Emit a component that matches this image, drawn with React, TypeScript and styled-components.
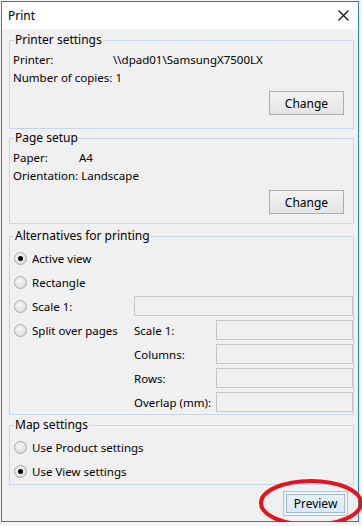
import React from "react";
import styled, { createGlobalStyle } from "styled-components";

const GlobalStyle = createGlobalStyle`
  html, body {
    margin: 0;
    padding: 0;
    background: #f4f4f4;
  }
  body {
    font-family: "Noto Sans", "Open Sans", sans-serif;
    font-size: 11.5px;
    color: #000;
  }
`;

const Dialog = styled.div`
  position: relative;
  margin: 1px 0 0 1px;
  width: 358px;
  height: 521px;
  box-sizing: border-box;
  border: 1px solid #1c80d6;
  background: #f0f0f0;
  display: flex;
  flex-direction: column;
`;

const TitleBar = styled.div`
  height: 27px;
  background: #fff;
  display: flex;
  align-items: center;
  justify-content: space-between;
  padding: 0 9px 0 6px;
  font-size: 12px;
`;

const CloseIcon = () => (
  <svg width="11" height="11" viewBox="0 0 11 11">
    <path d="M0.5 0.5 L10.5 10.5 M10.5 0.5 L0.5 10.5" stroke="#000" strokeWidth="1.1" fill="none" />
  </svg>
);

const Body = styled.div`
  flex: 1;
  display: flex;
  flex-direction: column;
  padding: 4px 4px 0 7px;
`;

const Group = styled.fieldset<{ $mt?: number }>`
  margin: ${(p) => p.$mt ?? 0}px 0 0 0;
  padding: 0;
  min-width: 0;
  border: 1px solid #c3d6ec;
`;

const Legend = styled.legend`
  margin-left: 4px;
  padding: 0 1px;
  line-height: 14px;
  font-size: 12px;
`;

const Content = styled.div<{ $pt?: number; $pb?: number; $pl?: number; $pr?: number }>`
  padding: ${(p) => p.$pt ?? 3}px ${(p) => p.$pr ?? 9}px ${(p) => p.$pb ?? 0}px
    ${(p) => p.$pl ?? 3}px;
  display: flex;
  flex-direction: column;
`;

const InfoRow = styled.div<{ $labelWidth: number }>`
  display: grid;
  grid-template-columns: minmax(${(p) => p.$labelWidth}px, max-content) 1fr;
  height: 18px;
  align-items: center;
  white-space: nowrap;

  & > span:first-child {
    padding-right: 3px;
  }
`;

const Button = styled.button<{ $default?: boolean }>`
  align-self: flex-end;
  font-family: inherit;
  font-size: 12px;
  color: #000;
  width: 75px;
  height: 24px;
  padding: 0;
  border: 1px solid ${(p) => (p.$default ? "#a9c1d8" : "#adadad")};
  background: ${(p) =>
    p.$default
      ? "linear-gradient(#e8f2fa, #d9e8f4)"
      : "linear-gradient(#f2f2f2, #e4e4e4)"};
  box-shadow: ${(p) => (p.$default ? "inset 0 0 0 2px #eef5fb, inset 0 0 0 3px #9fb8cf" : "none")};
`;

const OptionGrid = styled.div`
  display: grid;
  grid-template-columns: 120px 82px 1fr;
  grid-auto-rows: 24px;
  align-items: center;
  white-space: nowrap;
`;

const RadioLabel = styled.label`
  display: flex;
  align-items: center;
  gap: 5px;
  height: 24px;
`;

const RadioCircle = styled.span<{ $checked?: boolean }>`
  position: relative;
  width: 13px;
  height: 13px;
  box-sizing: border-box;
  border-radius: 50%;
  border: 1px solid #a9a9a9;
  background: radial-gradient(circle at 40% 35%, #f8f8f8 0%, #e2e2e2 60%, #d2d2d2 100%);
  flex: none;

  &::after {
    content: "";
    display: ${(p) => (p.$checked ? "block" : "none")};
    position: absolute;
    left: 3px;
    top: 3px;
    width: 5px;
    height: 5px;
    border-radius: 50%;
    background: #000;
  }
`;

const Field = styled.div<{ $span?: number }>`
  grid-column: span ${(p) => p.$span ?? 1};
  height: 20px;
  box-sizing: border-box;
  border: 1px solid #c6c6c6;
  background: #f0f0f0;
`;

const FieldLabel = styled.span`
  grid-column: 2;
`;

const Footer = styled.div`
  display: flex;
  justify-content: flex-end;
  padding: 6px 6px 0 0;
`;

const Highlight = styled.svg`
  position: absolute;
  left: 256px;
  top: 476px;
  overflow: visible;
`;

const Radio = ({ checked, children }: { checked?: boolean; children: React.ReactNode }) => (
  <RadioLabel>
    <RadioCircle $checked={checked} />
    <span>{children}</span>
  </RadioLabel>
);

export default function App() {
  return (
    <>
      <GlobalStyle />
      <Dialog>
        <TitleBar>
          <span>Print</span>
          <CloseIcon />
        </TitleBar>
        <Body>
          <Group>
            <Legend>Printer settings</Legend>
            <Content $pb={13}>
              <InfoRow $labelWidth={100}>
                <span>Printer:</span>
                <span>\\dpad01\SamsungX7500LX</span>
              </InfoRow>
              <InfoRow $labelWidth={100}>
                <span>Number of copies: 1</span>
              </InfoRow>
              <Button style={{ marginTop: 5 }}>Change</Button>
            </Content>
          </Group>

          <Group $mt={2}>
            <Legend>Page setup</Legend>
            <Content $pb={9}>
              <InfoRow $labelWidth={66}>
                <span>Paper:</span>
                <span>A4</span>
              </InfoRow>
              <InfoRow $labelWidth={66}>
                <span>Orientation:</span>
                <span>Landscape</span>
              </InfoRow>
              <Button style={{ marginTop: 6 }}>Change</Button>
            </Content>
          </Group>

          <Group $mt={5}>
            <Legend>Alternatives for printing</Legend>
            <Content $pl={4} $pr={0}>
              <OptionGrid>
                <Radio checked>Active view</Radio>
                <span />
                <span />
                <Radio>Rectangle</Radio>
                <span />
                <span />
                <Radio>Scale 1:</Radio>
                <Field $span={2} />
                <Radio>Split over pages</Radio>
                <span>Scale 1:</span>
                <Field />
                <FieldLabel>Columns:</FieldLabel>
                <Field />
                <FieldLabel>Rows:</FieldLabel>
                <Field />
                <FieldLabel>Overlap (mm):</FieldLabel>
                <Field />
              </OptionGrid>
            </Content>
          </Group>

          <Group $mt={3}>
            <Legend>Map settings</Legend>
            <Content $pl={4} $pb={1}>
              <Radio>Use Product settings</Radio>
              <Radio checked>Use View settings</Radio>
            </Content>
          </Group>

          <Footer>
            <Button $default style={{ width: 65, height: 25 }}>
              Preview
            </Button>
          </Footer>
        </Body>
        <Highlight width="105" height="50" viewBox="0 0 105 50">
          <ellipse cx="53" cy="25" rx="50" ry="22" fill="none" stroke="#e4141e" strokeWidth="4" />
        </Highlight>
      </Dialog>
    </>
  );
}
